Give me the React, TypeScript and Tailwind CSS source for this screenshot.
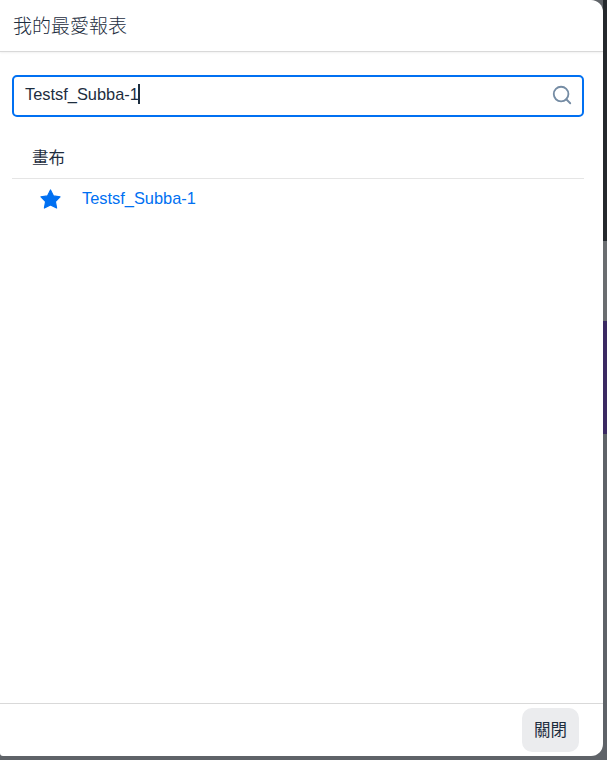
import { Search } from 'lucide-react'

const cjk = '"Liberation Sans", "Noto Sans CJK TC", sans-serif'

export default function App() {
  return (
    <div className="flex h-[760px] w-[607px] flex-col bg-[#5f6368]" style={{ fontFamily: cjk }}>
      <div className="flex h-[756px] w-[607px]">
        {/* Dialog */}
        <div className="flex h-[756px] w-[603px] flex-col overflow-hidden rounded-bl-[3px] rounded-br-[12px] rounded-tr-[12px] bg-white">
          <div className="flex h-[52px] shrink-0 items-center border-b border-[#d9d9d9] pl-[13px] pt-[4px] shadow-[0_1px_2px_rgba(0,0,0,0.06)]">
            <h1 className="text-[19px] font-light text-[#1d2d3e]">我的最愛報表</h1>
          </div>

          <div className="flex min-h-0 flex-1 flex-col pl-[12px] pr-[19px] pt-[23px]">
            <div className="flex h-[42px] items-center justify-between rounded-[5px] border-2 border-[#0070f2] pl-[11px] pr-[9px]">
              <div className="flex items-center pb-[3px] text-[16.4px] text-[#1d2d3e]">
                Testsf_Subba-1
                <span className="ml-[-1px] h-[20px] w-[2px] bg-[#1d2d3e]" />
              </div>
              <Search size={22} strokeWidth={2} className="mb-[3px] text-[#758ca4]" />
            </div>

            <div className="mt-[22px] flex h-[40px] items-center border-b border-[#e5e5e5] pl-[20px] text-[16.5px] text-[#1d2d3e]">
              畫布
            </div>
            <div className="flex h-[39px] items-center pl-[28px]">
              <svg width="21" height="20" viewBox="0 0 21 20" className="shrink-0">
                <polygon
                  points="10.5,1 13.5,6.9 20,7.8 15.4,12.5 16.6,19 10.5,16 4.4,19 5.6,12.5 1,7.8 7.5,6.9"
                  fill="#0070f2"
                  stroke="#0070f2"
                  strokeWidth="1.2"
                  strokeLinejoin="round"
                />
              </svg>
              <span className="ml-[21px] text-[16.4px] text-[#0070f2]">Testsf_Subba-1</span>
            </div>
          </div>

          <div className="flex h-[53px] shrink-0 items-center justify-end border-t border-[#d9d9d9] pr-[24px]">
            <button className="h-[44px] w-[57px] rounded-[10px] bg-[#ebecee] text-[16.5px] text-[#1d2d3e]">關閉</button>
          </div>
        </div>

        {/* Page behind the dialog */}
        <div className="flex h-[760px] w-[4px] flex-col">
          <div className="h-[241px] bg-[#25292d]" />
          <div className="h-[80px] bg-[#6a6d70]" />
          <div className="h-[113px] bg-[#3b2a63]" />
        </div>
      </div>
    </div>
  )
}
